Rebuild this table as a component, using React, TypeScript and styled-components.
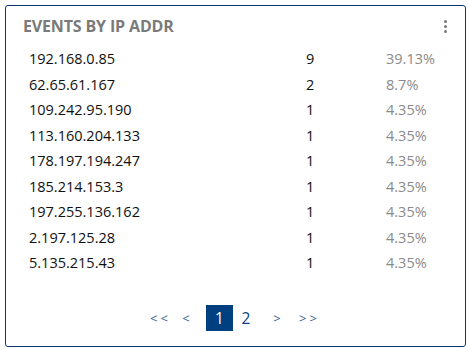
import React from "react";
import styled, { createGlobalStyle } from "styled-components";

const Global = createGlobalStyle`
  html, body { margin: 0; padding: 0; background: #fff; }
  body { font-family: "Open Sans", "Noto Sans", sans-serif; }
`;

const Page = styled.div`
  padding: 5px 3px 1px 5px;
`;

const Card = styled.div`
  box-sizing: border-box;
  width: 461px;
  height: 342px;
  border: 1px solid #0b3766;
  border-radius: 3px;
  display: flex;
  flex-direction: column;
  background: #fff;
`;

const Header = styled.div`
  display: flex;
  align-items: center;
  justify-content: space-between;
  padding: 10px 18px 0 17px;
  height: 30px;
  box-sizing: border-box;
`;

const Title = styled.h2`
  margin: 0;
  font-size: 16px;
  font-weight: 700;
  color: #7a7a7a;
  letter-spacing: -0.15px;
`;

const Kebab = styled.div`
  display: flex;
  flex-direction: column;
  gap: 2px;
  span {
    width: 3px;
    height: 3px;
    border-radius: 50%;
    background: #7a7a7a;
  }
`;

const Table = styled.div`
  display: flex;
  flex-direction: column;
  padding: 10px 0 0 23px;
  flex: 1;
`;

const Row = styled.div`
  display: grid;
  grid-template-columns: 277px 80px 1fr;
  height: 25.5px;
  align-items: center;
  font-size: 14.5px;
  color: #111;
`;

const Pct = styled.span`
  color: #8a8a8a;
`;

const Pager = styled.div`
  display: flex;
  align-items: center;
  justify-content: flex-start;
  padding: 0 0 15px 136px;
`;

const PageLink = styled.span<{ $active?: boolean; $w: number; $arrow?: boolean }>`
  display: inline-flex;
  align-items: center;
  justify-content: center;
  height: 26px;
  width: ${(p) => p.$w}px;
  color: ${(p) => (p.$active ? "#fff" : p.$arrow ? "#3a5f8c" : "#0b3f80")};
  background: ${(p) => (p.$active ? "#004080" : "transparent")};
  font-size: ${(p) => (p.$arrow ? 13 : 15.5)}px;
  letter-spacing: ${(p) => (p.$arrow ? "3px" : "0")};
  text-indent: ${(p) => (p.$arrow ? "3px" : "0")};
`;

const Spacer = styled.span`
  width: 10px;
`;

const rows = [
  ["192.168.0.85", "9", "39.13%"],
  ["62.65.61.167", "2", "8.7%"],
  ["109.242.95.190", "1", "4.35%"],
  ["113.160.204.133", "1", "4.35%"],
  ["178.197.194.247", "1", "4.35%"],
  ["185.214.153.3", "1", "4.35%"],
  ["197.255.136.162", "1", "4.35%"],
  ["2.197.125.28", "1", "4.35%"],
  ["5.135.215.43", "1", "4.35%"],
];

export default function App() {
  return (
    <>
      <Global />
      <Page>
        <Card>
          <Header>
            <Title>EVENTS BY IP ADDR</Title>
            <Kebab>
              <span />
              <span />
              <span />
            </Kebab>
          </Header>
          <Table>
            {rows.map((r) => (
              <Row key={r[0]}>
                <span>{r[0]}</span>
                <span>{r[1]}</span>
                <Pct>{r[2]}</Pct>
              </Row>
            ))}
          </Table>
          <Pager>
            <PageLink $w={34} $arrow>&lt;&lt;</PageLink>
            <PageLink $w={20} $arrow>&lt;</PageLink>
            <Spacer />
            <PageLink $w={27} $active>1</PageLink>
            <PageLink $w={26}>2</PageLink>
            <PageLink $w={36} $arrow>&gt;</PageLink>
            <PageLink $w={26} $arrow>&gt;&gt;</PageLink>
          </Pager>
        </Card>
      </Page>
    </>
  );
}
